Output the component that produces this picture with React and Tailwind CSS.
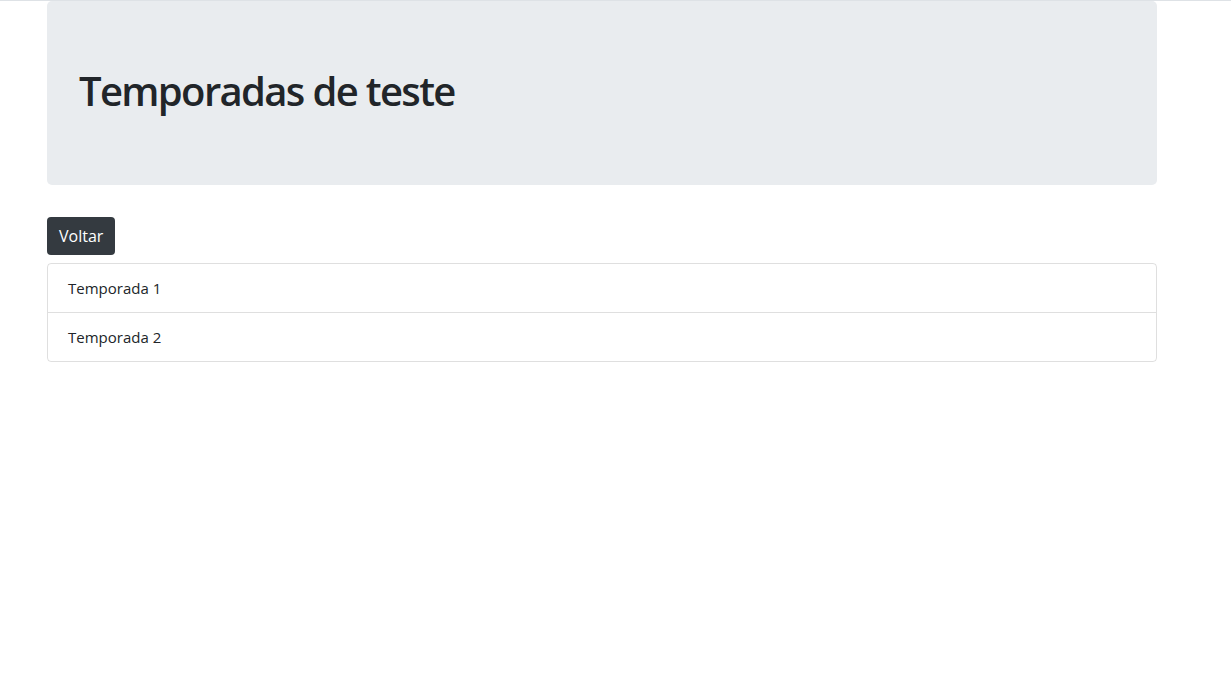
export default function App() {
    const temporadas = ['Temporada 1', 'Temporada 2'];

    return (
        <div className="min-h-screen bg-white border-t border-[#dee2e6] text-[#212529] font-['Open_Sans',sans-serif]">
            <div className="w-[1110px] ml-[47px]">
                {/* Jumbotron */}
                <div className="bg-[#e9ecef] rounded-[5px] px-8 pt-[66px] pb-[62px] mb-8">
                    <h1 className="text-[40px] leading-[48px] font-semibold tracking-[-1.65px] mb-2">Temporadas de teste</h1>
                </div>

                <button className="bg-[#343a40] text-white text-base leading-6 px-3 py-[7px] rounded-[4px] mb-2">
                    Voltar
                </button>

                <ul className="border border-[rgba(0,0,0,0.125)] rounded-[4px]">
                    {temporadas.map((t, i) => (
                        <li
                            key={t}
                            className={`px-5 py-3 text-[15px] leading-6 ${i > 0 ? 'border-t border-[rgba(0,0,0,0.125)]' : ''}`}
                        >
                            {t}
                        </li>
                    ))}
                </ul>
            </div>
        </div>
    );
}
